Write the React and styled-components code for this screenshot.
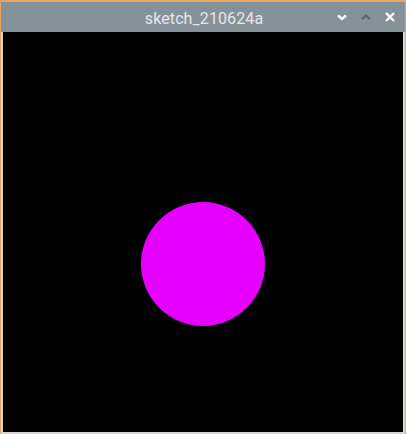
import React from 'react';
import styled, { createGlobalStyle } from 'styled-components';

const GlobalStyle = createGlobalStyle`
  html, body {
    margin: 0;
    padding: 0;
    background: #000;
  }
  body {
    font-family: Roboto, "Liberation Sans", sans-serif;
  }
`;

const WindowFrame = styled.div`
  width: 406px;
  height: 434px;
  box-sizing: border-box;
  display: flex;
  flex-direction: column;
  background: #e8a462;
  padding: 2px 1px 0 1px;
`;

const TitleBar = styled.div`
  height: 30px;
  flex-shrink: 0;
  background: #86929a;
  position: relative;
  display: flex;
  align-items: center;
  justify-content: center;
`;

const TitleText = styled.span`
  color: #e4e7e9;
  font-size: 16px;
  letter-spacing: 0.1px;
  margin-left: 2px;
  margin-top: 2px;
`;

const Controls = styled.div`
  position: absolute;
  right: 9px;
  top: 0;
  height: 100%;
  display: flex;
  align-items: center;
  gap: 12px;
`;

const ControlIcon = styled.svg`
  width: 12px;
  height: 12px;
  display: block;
`;

const Canvas = styled.div`
  flex: 1;
  background: #000;
  border-left: 2px solid #d9d6d2;
  border-right: 2px solid #d9d6d2;
  border-bottom: 2px solid #d9d6d2;
  display: flex;
  justify-content: center;
  padding-top: 170px;
`;

const Ball = styled.div`
  width: ${p => p.size}px;
  height: ${p => p.size}px;
  border-radius: 50%;
  background: #e600ff;
`;

const App = () => (
  <>
    <GlobalStyle />
    <WindowFrame>
      <TitleBar>
        <TitleText>sketch_210624a</TitleText>
        <Controls>
          <ControlIcon viewBox="0 0 12 12">
            <path d="M2 4.5 L6 8 L10 4.5" fill="none" stroke="#ffffff" strokeWidth="2.4" />
          </ControlIcon>
          <ControlIcon viewBox="0 0 12 12">
            <path d="M2 8 L6 4.5 L10 8" fill="none" stroke="#5f686e" strokeWidth="2.4" />
          </ControlIcon>
          <ControlIcon viewBox="0 0 12 12">
            <path d="M2 2 L10 10 M10 2 L2 10" fill="none" stroke="#ffffff" strokeWidth="2.4" />
          </ControlIcon>
        </Controls>
      </TitleBar>
      <Canvas>
        <Ball size={124} />
      </Canvas>
    </WindowFrame>
  </>
);

export default App;
